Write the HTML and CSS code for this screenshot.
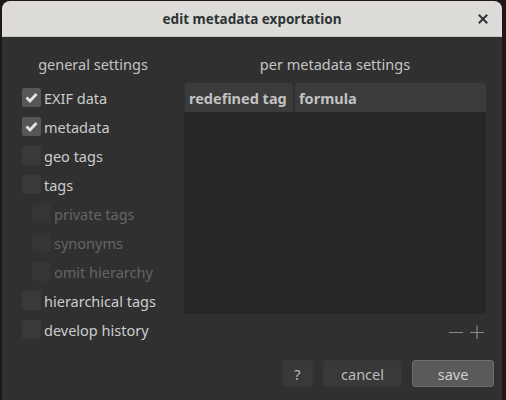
FILE: index.html
```html
<!DOCTYPE html>
<html>
<head>
<meta charset="utf-8">
<link rel="stylesheet" href="styles.css">
</head>
<body>
<div class="window">
  <div class="titlebar">
    <span class="title">edit metadata exportation</span>
    <span class="close">
      <svg width="10" height="10" viewBox="0 0 10 10"><path d="M1.5 1.5 L8.5 8.5 M8.5 1.5 L1.5 8.5" stroke="#2e3436" stroke-width="2" stroke-linecap="square"/></svg>
    </span>
  </div>
  <div class="content">
    <div class="columns">
      <div class="left">
        <div class="heading">general settings</div>
        <label class="row"><span class="box checked"><svg width="13" height="11" viewBox="0 0 13 11"><path d="M1.5 5.5 L5 9 L11.5 2" fill="none" stroke="#e4e4e4" stroke-width="2.8"/></svg></span><span>EXIF data</span></label>
        <label class="row"><span class="box checked"><svg width="13" height="11" viewBox="0 0 13 11"><path d="M1.5 5.5 L5 9 L11.5 2" fill="none" stroke="#e4e4e4" stroke-width="2.8"/></svg></span><span>metadata</span></label>
        <label class="row"><span class="box"></span><span>geo tags</span></label>
        <label class="row"><span class="box"></span><span>tags</span></label>
        <label class="row sub disabled"><span class="box"></span><span>private tags</span></label>
        <label class="row sub disabled"><span class="box"></span><span>synonyms</span></label>
        <label class="row sub disabled"><span class="box"></span><span>omit hierarchy</span></label>
        <label class="row"><span class="box"></span><span>hierarchical tags</span></label>
        <label class="row"><span class="box"></span><span>develop history</span></label>
      </div>
      <div class="right">
        <div class="heading">per metadata settings</div>
        <div class="table">
          <div class="thead">
            <div class="th th1">redefined tag</div>
            <div class="th th2">formula</div>
          </div>
          <div class="tbody"></div>
        </div>
        <div class="tools">
          <svg width="14" height="14" viewBox="0 0 14 14"><path d="M0 7.5 H14" stroke="#8a8a8a" stroke-width="1.2"/></svg>
          <svg width="14" height="14" viewBox="0 0 14 14"><path d="M0 7.5 H14 M7 0.5 V14" stroke="#8a8a8a" stroke-width="1.2"/></svg>
        </div>
      </div>
    </div>
    <div class="buttons">
      <button class="btn help">?</button>
      <button class="btn cancel">cancel</button>
      <button class="btn save">save</button>
    </div>
  </div>
</div>
</body>
</html>
```
FILE: styles.css
```css
html, body {
  margin: 0;
  padding: 0;
}
body {
  width: 506px;
  height: 400px;
  overflow: hidden;
  background: #1e1917;
  font-family: "Noto Sans", "Open Sans", sans-serif;
}
.window {
  margin: 1px 0 0 2px;
  width: 500px;
  height: 399px;
  background: #303030;
  border-radius: 8px 8px 0 0;
  overflow: hidden;
  display: flex;
  flex-direction: column;
}
.titlebar {
  height: 35px;
  background: #dedcd8;
  border-bottom: 1px solid #c6c3be;
  position: relative;
  display: flex;
  align-items: center;
  justify-content: center;
}
.title {
  font-weight: bold;
  font-size: 13.5px;
  color: #2e3436;
}
.close {
  position: absolute;
  right: 14px;
  top: 13px;
  width: 10px;
  height: 10px;
  display: flex;
}
.content {
  padding: 17px 8px 0 20px;
  display: flex;
  flex-direction: column;
}
.columns {
  display: flex;
  gap: 20px;
  padding-right: 8px;
}
.left {
  width: 142px;
  display: flex;
  flex-direction: column;
}
.right {
  width: 302px;
  display: flex;
  flex-direction: column;
}
.heading {
  height: 20px;
  line-height: 20px;
  margin-bottom: 9px;
  text-align: center;
  font-size: 14.5px;
  color: #c4c4c4;
  white-space: nowrap;
}
.row {
  height: 29px;
  display: flex;
  align-items: center;
  font-size: 14.5px;
  color: #cccccc;
  white-space: nowrap;
}
.box {
  width: 19px;
  height: 19px;
  border-radius: 2px;
  background: #393939;
  margin-right: 3px;
  display: flex;
  align-items: center;
  justify-content: center;
  flex: none;
}
.box.checked {
  background: #575757;
}
.row.sub {
  padding-left: 10px;
}
.row.disabled {
  color: #656565;
}
.row.disabled .box {
  background: #353535;
}
.table {
  display: flex;
  flex-direction: column;
}
.thead {
  display: flex;
  gap: 2px;
  height: 29px;
}
.th {
  background: #3b3b3b;
  border-radius: 3px 3px 0 0;
  font-weight: bold;
  font-size: 14.5px;
  color: #c2c2c2;
  display: flex;
  align-items: center;
  padding-left: 4px;
  box-sizing: border-box;
  white-space: nowrap;
}
.th1 {
  width: 108px;
  margin-left: 1px;
}
.th2 {
  flex: 1;
}
.tbody {
  height: 202px;
  background: #272727;
}
.tools {
  display: flex;
  justify-content: flex-end;
  gap: 7px;
  padding-right: 2px;
  margin-top: 11px;
}
.buttons {
  display: flex;
  justify-content: flex-end;
  gap: 10px;
  margin-top: 16px;
}
.btn {
  height: 27px;
  border: 1px solid #363636;
  background: #393939;
  border-radius: 3px;
  color: #bcbcbc;
  font-family: "Noto Sans", "Open Sans", sans-serif;
  font-size: 14.5px;
  padding: 0;
  box-sizing: border-box;
}
.help {
  width: 31px;
}
.cancel {
  width: 79px;
}
.save {
  width: 82px;
  background: #5a5a5a;
  border: 1px solid #6e6e6e;
  color: #cfcfcf;
}
```
